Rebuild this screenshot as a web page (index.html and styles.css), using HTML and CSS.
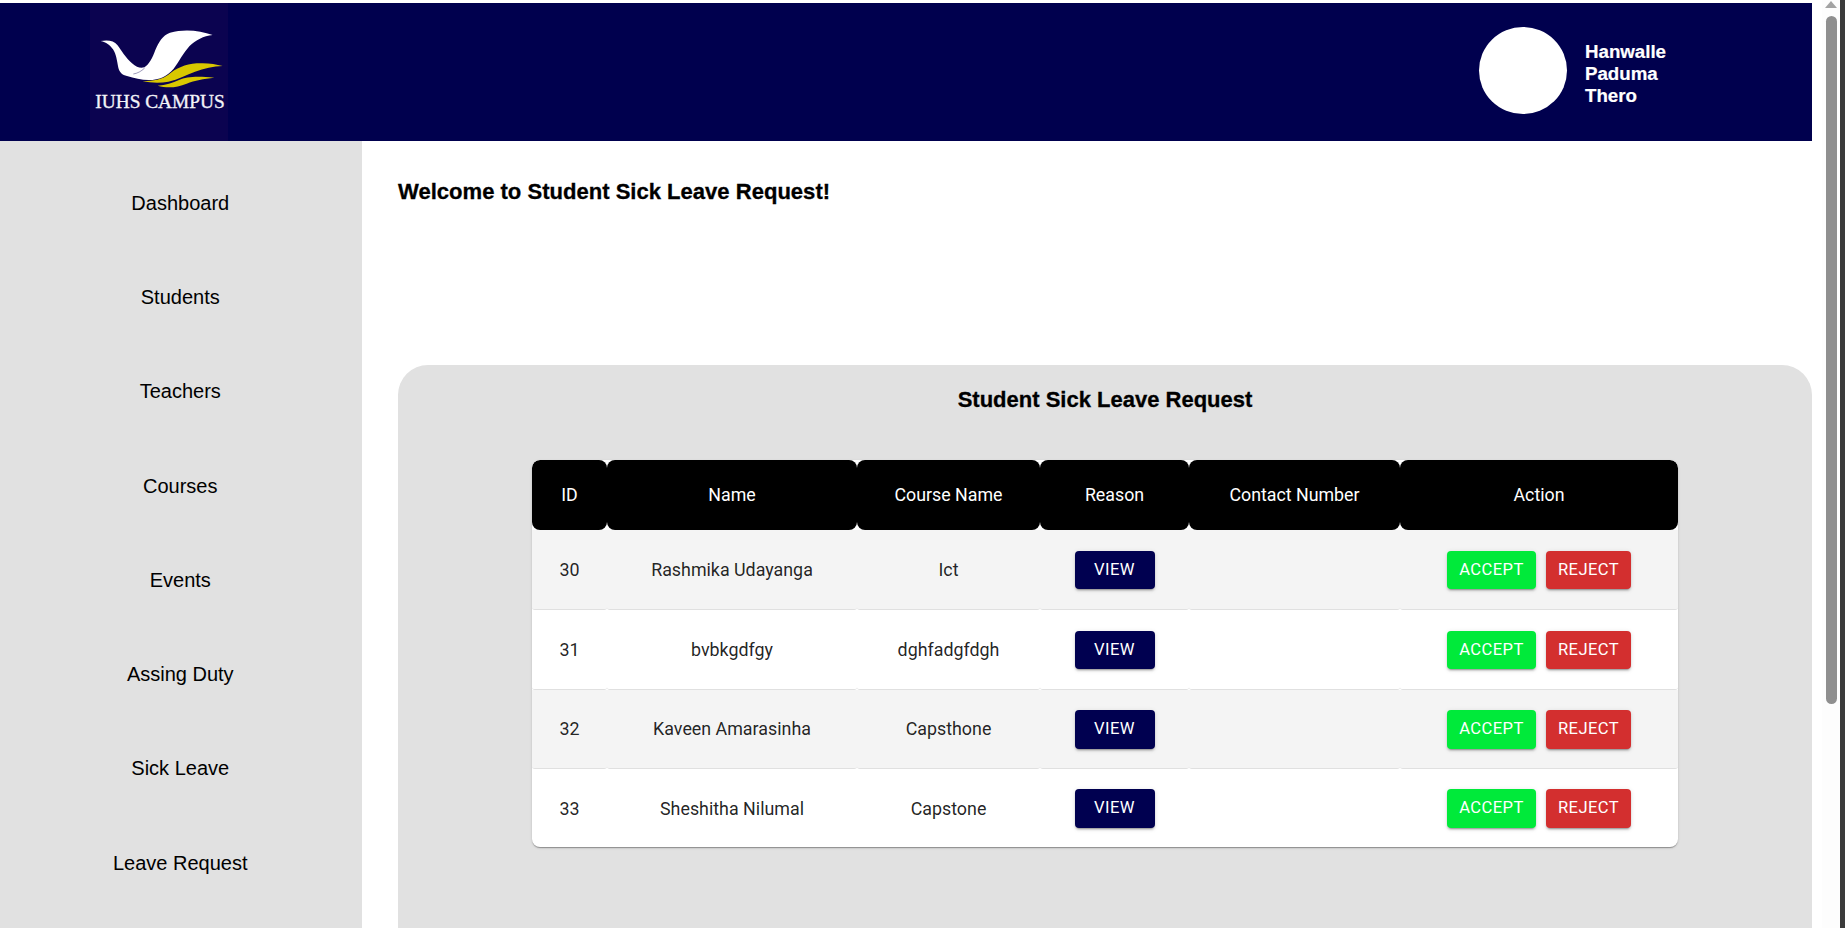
FILE: index.html
```html
<!DOCTYPE html>
<html lang="en">
<head>
<meta charset="utf-8">
<title>Student Sick Leave Request</title>
<link rel="stylesheet" href="styles.css">
</head>
<body>
<div class="window">
  <div class="page">
    <header class="topbar">
      <svg class="logo" viewBox="270 9 414 414" aria-label="IUHS Campus logo">
        <rect x="270" y="9" width="414" height="414" fill="#0b0350"/>
        <path fill="#fff" d="M302 123C324 119 342 122 352 135C364 151 376 172 396 190C410 202 422 206 433 202C448 192 457 175 466 150C476 126 487 107 510 98C552 86 600 91 638 105C610 108 588 120 568 139C550 158 538 184 521 206C503 228 478 240 446 240C424 240 402 235 381 228C367 225 358 216 355 203C351 183 349 163 339 148C329 134 319 127 302 123Z"/>
        <path fill="none" stroke="#0b0350" stroke-width="1.2" d="M400 222C412 220 424 214 434 204"/>
        <path fill="#d9c800" d="M428 243C460 243 487 238 505 224C528 206 555 192 590 190C620 188 645 191 668 198C640 199 612 205 585 215C560 224 535 238 505 245C480 250 452 249 428 243Z"/>
        <path fill="#d9c800" d="M473 257C497 256 518 249 537 240C560 230 590 228 643 233C610 236 585 241 560 251C530 263 502 265 473 257Z"/>
        <text class="logo-text" x="480" y="324" text-anchor="middle">IUHS CAMPUS</text>
      </svg>
      <div class="user">
        <div class="avatar"></div>
        <div class="user-name">Hanwalle Paduma Thero</div>
      </div>
    </header>
    <div class="layout">
      <nav class="sidebar">
        <a class="nav-item">Dashboard</a>
        <a class="nav-item">Students</a>
        <a class="nav-item">Teachers</a>
        <a class="nav-item">Courses</a>
        <a class="nav-item">Events</a>
        <a class="nav-item">Assing Duty</a>
        <a class="nav-item">Sick Leave</a>
        <a class="nav-item">Leave Request</a>
      </nav>
      <main class="content">
        <h1 class="welcome">Welcome to Student Sick Leave Request!</h1>
        <section class="panel">
          <h2 class="panel-title">Student Sick Leave Request</h2>
          <div class="table-card">
            <table class="leave-table">
              <colgroup>
                <col class="c-id"><col class="c-name"><col class="c-course"><col class="c-reason"><col class="c-contact"><col class="c-action">
              </colgroup>
              <thead>
                <tr><th>ID</th><th>Name</th><th>Course Name</th><th>Reason</th><th>Contact Number</th><th>Action</th></tr>
              </thead>
              <tbody>
                <tr>
                  <td>30</td><td>Rashmika Udayanga</td><td>Ict</td>
                  <td><button class="btn btn-view">View</button></td><td></td>
                  <td><div class="actions"><button class="btn btn-accept">Accept</button><button class="btn btn-reject">Reject</button></div></td>
                </tr>
                <tr>
                  <td>31</td><td>bvbkgdfgy</td><td>dghfadgfdgh</td>
                  <td><button class="btn btn-view">View</button></td><td></td>
                  <td><div class="actions"><button class="btn btn-accept">Accept</button><button class="btn btn-reject">Reject</button></div></td>
                </tr>
                <tr>
                  <td>32</td><td>Kaveen Amarasinha</td><td>Capsthone</td>
                  <td><button class="btn btn-view">View</button></td><td></td>
                  <td><div class="actions"><button class="btn btn-accept">Accept</button><button class="btn btn-reject">Reject</button></div></td>
                </tr>
                <tr>
                  <td>33</td><td>Sheshitha Nilumal</td><td>Capstone</td>
                  <td><button class="btn btn-view">View</button></td><td></td>
                  <td><div class="actions"><button class="btn btn-accept">Accept</button><button class="btn btn-reject">Reject</button></div></td>
                </tr>
              </tbody>
            </table>
          </div>
        </section>
      </main>
    </div>
  </div>
  <div class="gutter"></div>
  <div class="scrollbar">
    <div class="scroll-up"></div>
    <div class="scroll-thumb"></div>
  </div>
  <div class="edge"></div>
</div>
</body>
</html>
```

FILE: styles.css
```css
* { box-sizing: border-box; }
html, body { margin: 0; padding: 0; height: 100%; overflow: hidden; background: #fff; }
body { font-family: "Liberation Sans", Arial, sans-serif; color: #000; }

.window { display: flex; width: 1845px; height: 928px; overflow: hidden; }
.page { width: 1812px; flex: none; padding-top: 3px; display: flex; flex-direction: column; }
.gutter { width: 10px; flex: none; background: #fff; }
.scrollbar { width: 18px; flex: none; background: #fdfdfd; padding-top: 1px; display: flex; flex-direction: column; align-items: center; }
.scroll-up { width: 0; height: 0; border-left: 6.5px solid transparent; border-right: 6.5px solid transparent; border-bottom: 7px solid #a3a3a3; }
.scroll-thumb { width: 11px; height: 688px; margin-top: 8px; background: #8f8f8f; border-radius: 6px; }
.edge { width: 5px; flex: none; background: #3b3b3b; }

.topbar { height: 138px; flex: none; background: #00004e; display: flex; align-items: center; justify-content: space-between; padding: 0 107px 0 90px; }
.logo { width: 138px; height: 138px; display: block; }
.logo-text { font-family: "Liberation Serif", "Times New Roman", serif; font-size: 58px; fill: #f4f4f8; stroke: #f4f4f8; stroke-width: 1px; }
.user { display: flex; align-items: center; gap: 18px; }
.avatar { width: 88px; height: 87px; margin-bottom: 3px; border-radius: 50%; background: #fff; }
.user-name { width: 120px; margin-top: 3px; color: #fff; font-size: 18.7px; font-weight: 700; line-height: 22px; -webkit-text-stroke: .2px #fff; }

.layout { flex: 1; display: flex; min-height: 0; }
.sidebar { width: 362px; flex: none; background: #e1e1e1; padding: 15px 1.5px 0 0; display: flex; flex-direction: column; }
.nav-item { height: 94.3px; flex: none; display: flex; align-items: center; justify-content: center; font-size: 20px; color: #000; }

.content { flex: 1; padding-left: 36px; min-width: 0; }
.welcome { margin: 35px 0 0; height: 189px; font-size: 22.05px; line-height: 32px; font-weight: 700; -webkit-text-stroke: .3px #000; }
.panel { background: #e1e1e1; border-radius: 30px 30px 0 0; padding: 21px 134px 0; height: 700px; }
.panel-title { margin: 0 0 46px; text-align: center; font-size: 22px; line-height: 28px; font-weight: 700; -webkit-text-stroke: .3px #000; }

.table-card { background: #fff; border-radius: 8px; box-shadow: 0 2px 1px -1px rgba(0,0,0,.2), 0 1px 1px 0 rgba(0,0,0,.14), 0 1px 3px 0 rgba(0,0,0,.12); overflow: hidden; }
.leave-table { width: 100%; border-collapse: separate; border-spacing: 0; table-layout: fixed; font-family: Roboto, sans-serif; }
.c-id { width: 75px; }
.c-name { width: 250px; }
.c-course { width: 183px; }
.c-reason { width: 149px; }
.c-contact { width: 211px; }
.c-action { width: 278px; }
.leave-table th { height: 70px; background: #000; color: #fff; font-size: 17.8px; font-weight: 400; text-align: center; border-radius: 8px; padding: 0 0 1px; }
.leave-table td { height: 80px; text-align: center; font-size: 17.85px; color: rgba(0,0,0,.87); border-bottom: 1px solid #e0e0e0; border-radius: 0 0 3px 3px; padding: 0; }
.leave-table tbody tr:nth-child(3) td { height: 79px; padding-bottom: 1px; }
.leave-table tbody tr:nth-child(4) td { height: 78px; }
.leave-table tbody tr:nth-child(odd) td { background: #f4f4f4; }
.leave-table tbody tr:last-child td { border-bottom: 0; }

.actions { display: flex; justify-content: center; gap: 10px; }
.btn { height: 38.5px; margin-top: 1px; border: 0; border-radius: 4px; padding: 0 0 2px; font-family: Roboto, sans-serif; font-size: 16.6px; font-weight: 400; letter-spacing: .4px; text-transform: uppercase; color: #fff; box-shadow: 0 3px 1px -2px rgba(0,0,0,.2), 0 2px 2px 0 rgba(0,0,0,.14), 0 1px 5px 0 rgba(0,0,0,.12); }
.leave-table tbody tr:nth-child(3) .btn { margin-top: 2px; }
.btn-view { width: 80px; background: #000050; }
.btn-accept { width: 89px; background: #00ea3a; }
.btn-reject { width: 85px; background: #d32f2f; }
```
